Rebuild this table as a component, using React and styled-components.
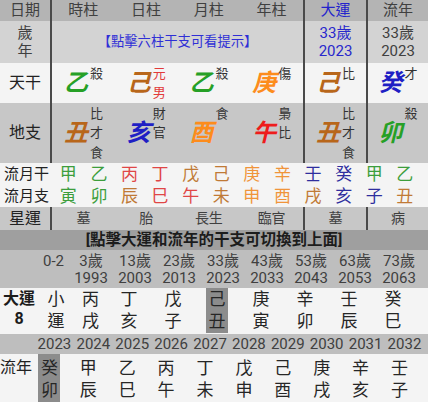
import React from "react";
import styled, { createGlobalStyle } from "styled-components";

const GlobalStyle = createGlobalStyle`
  html, body {
    margin: 0;
    padding: 0;
    background: #f4f4f4;
  }
  body {
    font-family: Roboto, "Noto Sans CJK TC", "Noto Sans", sans-serif;
    color: #333;
  }
`;

const STRONG = {
  wood: "#26a026",
  fire: "#ee1c1c",
  earth: "#b8661a",
  metal: "#fd8c1c",
  water: "#1f1fc4",
};

const SOFT = {
  wood: "#3c9e3c",
  fire: "#e04646",
  earth: "#c07a36",
  metal: "#f0943a",
  water: "#2e2e9e",
};

const ELEMENT = {
  甲: "wood", 乙: "wood", 寅: "wood", 卯: "wood",
  丙: "fire", 丁: "fire", 巳: "fire", 午: "fire",
  戊: "earth", 己: "earth", 辰: "earth", 戌: "earth", 丑: "earth", 未: "earth",
  庚: "metal", 辛: "metal", 申: "metal", 酉: "metal",
  壬: "water", 癸: "water", 亥: "water", 子: "water",
};

const TOP_COLS = "52px repeat(4, 1fr) 63px 62px";
const LINE = "2px solid #4a4a4a";

const Page = styled.div`
  width: 428px;
  overflow: hidden;
`;

const Grid = styled.div`
  display: grid;
  grid-template-columns: ${(p) => p.$cols};
  height: ${(p) => p.$h}px;
  background: ${(p) => p.$bg};
`;

const Cell = styled.div`
  display: flex;
  flex-direction: column;
  align-items: ${(p) => p.$align || "center"};
  justify-content: ${(p) => p.$justify || "center"};
  grid-column: ${(p) => (p.$span ? `span ${p.$span}` : "auto")};
  padding-top: ${(p) => p.$top || 0}px;
  border-left: ${(p) => (p.$line ? LINE : "none")};
  border-right: ${(p) => (p.$lineRight ? LINE : "none")};
  color: ${(p) => p.$color || "#404040"};
  font-size: ${(p) => p.$size || 15}px;
  font-weight: ${(p) => (p.$bold ? "bold" : "normal")};
  line-height: ${(p) => p.$lh || 18}px;
  white-space: nowrap;
  min-width: 0;
`;

const Hint = styled.span`
  color: #2f2fd6;
  font-size: 13.3px;
`;

const Group = styled.div`
  display: flex;
  align-items: center;
`;

const Glyph = styled.span`
  font-size: 24px;
  line-height: 26px;
  font-weight: bold;
  font-style: italic;
  color: ${(p) => p.$color};
`;

const Tags = styled.div`
  display: flex;
  flex-direction: column;
  margin-left: 2px;
`;

const Tag = styled.span`
  display: block;
  width: 13px;
  height: ${(p) => p.$lh}px;
  font-size: 13px;
  line-height: ${(p) => p.$lh}px;
  color: ${(p) => p.$color || "#333"};
`;

const Banner = styled.div`
  height: 20px;
  background: #9f9f9f;
  color: #1c1c1c;
  font-size: 15.5px;
  font-weight: bold;
  line-height: 20px;
  text-align: center;
`;

const Chars = styled.div`
  display: flex;
  flex-direction: column;
  align-items: center;
  width: 22px;
  padding: ${(p) => p.$pad};
  background: ${(p) => (p.$active ? "#8c8c8c" : "transparent")};
  color: #262626;
  font-size: 17px;
  line-height: 22px;
`;

const Pillar = ({ ch, tags, slots, lh, tagColor }) => {
  const filled = [...tags, ...Array(slots).fill("")].slice(0, slots);
  return (
    <Group>
      <Glyph $color={STRONG[ELEMENT[ch]]}>{ch}</Glyph>
      <Tags>
        {filled.map((t, i) => (
          <Tag key={i} $lh={lh} $color={tagColor}>
            {t}
          </Tag>
        ))}
      </Tags>
    </Group>
  );
};

const columns = [
  { stem: "乙", stemTags: ["殺"], branch: "丑", hidden: ["比", "才", "食"] },
  { stem: "己", stemTags: ["元", "男"], tagColor: "#e23a3a", branch: "亥", hidden: ["財", "官"] },
  { stem: "乙", stemTags: ["殺"], branch: "酉", hidden: ["食"] },
  { stem: "庚", stemTags: ["傷"], branch: "午", hidden: ["梟", "比"] },
  { stem: "己", stemTags: ["比"], branch: "丑", hidden: ["比", "才", "食"] },
  { stem: "癸", stemTags: ["才"], branch: "卯", hidden: ["殺"] },
];

const stars = ["墓", "胎", "長生", "臨官", "墓", "病"];
const monthStems = "甲乙丙丁戊己庚辛壬癸甲乙".split("");
const monthBranches = "寅卯辰巳午未申酉戌亥子丑".split("");

const luckAges = ["0-2", "3歲", "13歲", "23歲", "33歲", "43歲", "53歲", "63歲", "73歲"];
const luckYears = ["", "1993", "2003", "2013", "2023", "2033", "2043", "2053", "2063"];
const luckChars = [
  ["小", "運"], ["丙", "戌"], ["丁", "亥"], ["戊", "子"], ["己", "丑"],
  ["庚", "寅"], ["辛", "卯"], ["壬", "辰"], ["癸", "巳"],
];
const yearList = ["2023", "2024", "2025", "2026", "2027", "2028", "2029", "2030", "2031", "2032"];
const yearChars = [
  ["癸", "卯"], ["甲", "辰"], ["乙", "巳"], ["丙", "午"], ["丁", "未"],
  ["戊", "申"], ["己", "酉"], ["庚", "戌"], ["辛", "亥"], ["壬", "子"],
];

const lineFor = (i) => i >= 4;

export default function App() {
  return (
    <Page>
      <GlobalStyle />

      <Grid $cols={TOP_COLS} $h={21} $bg="#b4b4b4">
        <Cell $lineRight $lh={21}>日期</Cell>
        <Cell $lh={21}>時柱</Cell>
        <Cell $lh={21}>日柱</Cell>
        <Cell $lh={21}>月柱</Cell>
        <Cell $lh={21}>年柱</Cell>
        <Cell $line $lh={21} $color="#2424cc">大運</Cell>
        <Cell $line $lh={21}>流年</Cell>
      </Grid>

      <Grid $cols={TOP_COLS} $h={42} $bg="#d3d3d3">
        <Cell $lineRight $lh={18}>
          <span>歲</span>
          <span>年</span>
        </Cell>
        <Cell $span={4}>
          <Hint>【點擊六柱干支可看提示】</Hint>
        </Cell>
        <Cell $line $color="#2828cc">
          <span>33歲</span>
          <span>2023</span>
        </Cell>
        <Cell $line>
          <span>33歲</span>
          <span>2023</span>
        </Cell>
      </Grid>

      <Grid $cols={TOP_COLS} $h={40} $bg="#f4f4f4">
        <Cell $lineRight $size={16} $color="#222">天干</Cell>
        {columns.map((c, i) => (
          <Cell key={i} $line={lineFor(i)}>
            <Pillar ch={c.stem} tags={c.stemTags} slots={2} lh={19} tagColor={c.tagColor} />
          </Cell>
        ))}
      </Grid>

      <Grid $cols={TOP_COLS} $h={60} $bg="#c7c7c7">
        <Cell $lineRight $size={16} $color="#222">地支</Cell>
        {columns.map((c, i) => (
          <Cell key={i} $line={lineFor(i)}>
            <Pillar ch={c.branch} tags={c.hidden} slots={3} lh={19.5} />
          </Cell>
        ))}
      </Grid>

      <Grid $cols="53px repeat(12, 30.6px)" $h={22} $bg="#f4f4f4">
        <Cell $color="#222" $lh={22}>流月干</Cell>
        {monthStems.map((s, i) => (
          <Cell key={i} $size={17} $lh={22} $color={SOFT[ELEMENT[s]]}>{s}</Cell>
        ))}
      </Grid>
      <Grid $cols="53px repeat(12, 30.6px)" $h={22} $bg="#f4f4f4">
        <Cell $color="#222" $lh={22}>流月支</Cell>
        {monthBranches.map((s, i) => (
          <Cell key={i} $size={17} $lh={22} $color={SOFT[ELEMENT[s]]}>{s}</Cell>
        ))}
      </Grid>

      <Grid $cols={TOP_COLS} $h={23} $bg="#c7c7c7">
        <Cell $lineRight $size={16} $color="#222" $lh={23}>星運</Cell>
        {stars.map((s, i) => (
          <Cell key={i} $line={lineFor(i)} $size={14} $lh={23}>{s}</Cell>
        ))}
      </Grid>

      <Banner>[點擊大運和流年的干支可切換到上面]</Banner>

      <Grid $cols="38px 31px repeat(8, 44px)" $h={38} $bg="#bebebe">
        <Cell />
        {luckAges.map((a, i) => (
          <Cell key={i} $justify="flex-start" $lh={17} $top={3}>
            <span>{a}</span>
            <span>{luckYears[i]}</span>
          </Cell>
        ))}
      </Grid>

      <Grid $cols="38px 36px 33px repeat(7, 44px)" $h={46} $bg="#f4f4f4">
        <Cell $justify="flex-start" $bold $size={16} $lh={20} $top={1} $color="#1c1c1c">
          <span>大運</span>
          <span>8</span>
        </Cell>
        {luckChars.map((c, i) => (
          <Cell key={i} $justify="flex-start">
            <Chars $active={i === 4} $pad="0 0 1px">
              <span>{c[0]}</span>
              <span>{c[1]}</span>
            </Chars>
          </Cell>
        ))}
      </Grid>

      <Grid $cols="35px repeat(10, 38.9px)" $h={20} $bg="#bebebe">
        <Cell />
        {yearList.map((y) => (
          <Cell key={y} $lh={20}>{y}</Cell>
        ))}
      </Grid>

      <Grid $cols="30px repeat(10, 38.9px)" $h={48} $bg="#f4f4f4">
        <Cell $justify="flex-start" $align="flex-start" $size={16} $lh={22} $top={3} $color="#222">
          流年
        </Cell>
        {yearChars.map((c, i) => (
          <Cell key={i} $justify="flex-start">
            <Chars $active={i === 0} $pad="3px 0 1px">
              <span>{c[0]}</span>
              <span>{c[1]}</span>
            </Chars>
          </Cell>
        ))}
      </Grid>
    </Page>
  );
}
